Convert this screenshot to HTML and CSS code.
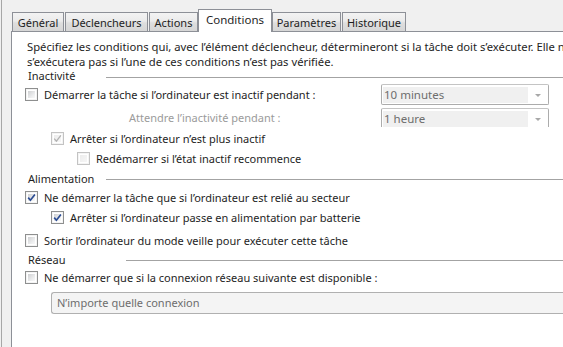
FILE: index.html
```html
<!DOCTYPE html>
<html lang="fr">
<head>
<meta charset="utf-8">
<title>Conditions</title>
<link rel="stylesheet" href="styles.css">
</head>
<body>
<div class="window">
  <div class="tabs">
    <div class="tab tab-general">Général</div>
    <div class="tab tab-decl">Déclencheurs</div>
    <div class="tab tab-actions">Actions</div>
    <div class="tab tab-active tab-cond">Conditions</div>
    <div class="tab tab-param">Paramètres</div>
    <div class="tab tab-hist">Historique</div>
  </div>
  <div class="panel">
    <p class="desc">Spécifiez les conditions qui, avec l’élément déclencheur, détermineront si la tâche doit s’exécuter. Elle ne<br>s’exécutera pas si l’une de ces conditions n’est pas vérifiée.</p>

    <div class="section-head head-idle"><span class="section-title">Inactivité</span><span class="rule"></span></div>

    <div class="combo-row row-1">
      <div class="opt">
        <span class="cb"></span>
        <span class="opt-label">Démarrer la tâche si l’ordinateur est inactif pendant :</span>
      </div>
      <div class="combo">
        <span class="combo-value">10 minutes</span>
        <span class="combo-arrow"><span class="tri"></span></span>
      </div>
    </div>

    <div class="combo-row row-2">
      <div class="wait-label">Attendre l’inactivité pendant :</div>
      <div class="combo combo-cut">
        <span class="combo-value">1 heure</span>
        <span class="combo-arrow"><span class="tri"></span></span>
      </div>
    </div>

    <div class="opt lvl-2 row-3">
      <span class="cb cb-disabled"><svg class="check" viewBox="0 0 13 13"><path d="M3.2 6.6 L5.4 9.2 L9.9 3.4"/></svg></span>
      <span class="opt-label">Arrêter si l’ordinateur n’est plus inactif</span>
    </div>

    <div class="opt lvl-3">
      <span class="cb cb-disabled"></span>
      <span class="opt-label">Redémarrer si l’état inactif recommence</span>
    </div>

    <div class="section-head head-power"><span class="section-title">Alimentation</span><span class="rule"></span></div>

    <div class="opt lvl-1 row-power1">
      <span class="cb cb-checked"><svg class="check" viewBox="0 0 13 13"><path d="M3.2 6.6 L5.4 9.2 L9.9 3.4"/></svg></span>
      <span class="opt-label">Ne démarrer la tâche que si l’ordinateur est relié au secteur</span>
    </div>

    <div class="opt lvl-2">
      <span class="cb cb-checked"><svg class="check" viewBox="0 0 13 13"><path d="M3.2 6.6 L5.4 9.2 L9.9 3.4"/></svg></span>
      <span class="opt-label">Arrêter si l’ordinateur passe en alimentation par batterie</span>
    </div>

    <div class="opt lvl-1 row-wake">
      <span class="cb"></span>
      <span class="opt-label">Sortir l’ordinateur du mode veille pour exécuter cette tâche</span>
    </div>

    <div class="section-head head-net"><span class="section-title title-net">Réseau</span><span class="rule"></span></div>

    <div class="opt lvl-1 row-net">
      <span class="cb"></span>
      <span class="opt-label">Ne démarrer que si la connexion réseau suivante est disponible :</span>
    </div>

    <div class="net-combo">N’importe quelle connexion</div>
  </div>
</div>
</body>
</html>
```

FILE: styles.css
```css
html, body {
  margin: 0;
  padding: 0;
  overflow: hidden;
  background: #f0f0f0;
}

body {
  font-family: "Noto Sans", "Open Sans", sans-serif;
  font-size: 11px;
  color: #1e1e1e;
  width: 563px;
  height: 347px;
}

.window {
  margin-left: 1px;
  border-left: 1px solid #a7a7a7;
  padding-left: 9px;
  padding-top: 9px;
  width: 562px;
  height: 347px;
  box-sizing: border-box;
  display: flex;
  flex-direction: column;
}

/* ---------- tabs ---------- */
.tabs {
  flex: none;
  display: flex;
  align-items: flex-end;
  gap: 1px;
  height: 23px;
  margin-bottom: -1px;
  padding-left: 1px;
  position: relative;
  z-index: 1;
}

.tab {
  box-sizing: border-box;
  height: 19px;
  margin-bottom: 1px;
  border: 1px solid #8d9097;
  border-bottom: none;
  background: linear-gradient(#f3f3f3, #ebebeb 45%, #dedede 55%, #d6d6d6);
  display: flex;
  align-items: center;
  justify-content: center;
  white-space: nowrap;
  padding-top: 1px;
}

.tab-general { width: 52px; }
.tab-decl { width: 83px; }
.tab-actions { width: 49px; }
.tab-cond { width: 74px; }
.tab-param { width: 69px; }
.tab-hist { width: 64px; }

.tab-active {
  height: 23px;
  margin-bottom: 0;
  margin-left: -1px;
  margin-right: -1px;
  background: #ffffff;
  padding-top: 0;
  padding-bottom: 3px;
  font-size: 11.5px;
}

/* ---------- panel ---------- */
.panel {
  flex: 1;
  min-height: 0;
  overflow: hidden;
  background: #ffffff;
  border: 1px solid #8d9097;
  border-right: none;
  border-bottom: none;
  box-sizing: border-box;
}

.desc {
  margin: 7px 0 0 15px;
  line-height: 15px;
  white-space: nowrap;
  font-size: 11.25px;
}

.section-head {
  display: flex;
  align-items: center;
  height: 13px;
  margin-left: 16px;
}

.section-title {
  width: 78px;
  flex: none;
  white-space: nowrap;
}

.title-net { width: 98px; }

.rule {
  flex: 1;
  height: 1px;
  background: #a3a3a3;
  margin-top: 3px;
}

.head-power { margin-top: 4px; }
.head-power .rule { margin-top: 2px; }
.head-net { margin-top: 3px; }
.head-net .rule { margin-top: 2px; }

.opt {
  display: flex;
  align-items: center;
  height: 20px;
  white-space: nowrap;
}

.lvl-1 { padding-left: 13px; }
.lvl-2 { padding-left: 39px; }
.lvl-3 { padding-left: 65px; }

.row-3 { margin-top: 1px; }
.row-power1 { margin-top: 2px; }
.row-wake { margin-top: 3px; }
.row-net { margin-top: 1px; }

.opt-label { margin-left: 6px; }

/* ---------- checkboxes ---------- */
.cb {
  flex: none;
  position: relative;
  width: 13px;
  height: 13px;
  box-sizing: border-box;
  border: 1px solid #8e8f8f;
  padding: 2px;
  background: linear-gradient(135deg, #cfd0d2, #eeeff0 70%, #f8f8f8) content-box, #ffffff;
  box-shadow: inset 0 0 0 1px #f4f4f4;
}

.cb-disabled {
  border-color: #c3c3c3;
  background: linear-gradient(135deg, #ececec, #f6f6f6) content-box, #ffffff;
}

.check {
  position: absolute;
  left: -1px;
  top: -1px;
  width: 13px;
  height: 13px;
}

.check path {
  fill: none;
  stroke: #2b4c93;
  stroke-width: 1.7;
  stroke-linejoin: miter;
}

.cb-disabled .check path {
  stroke: #b2b2b2;
  stroke-width: 1.3;
}

/* ---------- combos ---------- */
.combo-row {
  display: grid;
  grid-template-columns: 356px 168px;
  align-items: center;
  padding-left: 13px;
}

.row-1 {
  margin-top: 2px;
  height: 21px;
}

.row-2 {
  margin-top: 3px;
  height: 19px;
  align-items: start;
}

.row-1 .opt { height: 21px; }

.wait-label {
  padding-left: 104px;
  color: #9b9b9b;
  white-space: nowrap;
  align-self: center;
}

.combo {
  box-sizing: border-box;
  height: 21px;
  border: 1px solid #acacac;
  border-top-color: #c4c4c4;
  border-radius: 2px;
  padding: 2px 0 1px 1px;
  display: flex;
  background: #ffffff;
}

.combo-cut {
  height: 19px;
  border-bottom: none;
  padding-bottom: 0;
  border-radius: 2px 2px 0 0;
}

.combo-value {
  width: 145px;
  background: #f0f0f0;
  color: #6d6d6d;
  padding-left: 1px;
  box-sizing: border-box;
  line-height: 16px;
  font-size: 11.5px;
}

.combo-arrow {
  flex: 1;
  display: flex;
  align-items: center;
  justify-content: center;
}

.tri {
  width: 0;
  height: 0;
  border-left: 3px solid transparent;
  border-right: 3px solid transparent;
  border-top: 3px solid #a8a8a8;
  margin-top: 1px;
}

.net-combo {
  margin: 5px 0 0 39px;
  height: 22px;
  box-sizing: border-box;
  border: 1px solid #b0b0b0;
  border-right: none;
  border-radius: 3px 0 0 3px;
  background: #f4f4f4;
  color: #6d6d6d;
  padding-left: 5px;
  line-height: 20px;
  white-space: nowrap;
}
```
